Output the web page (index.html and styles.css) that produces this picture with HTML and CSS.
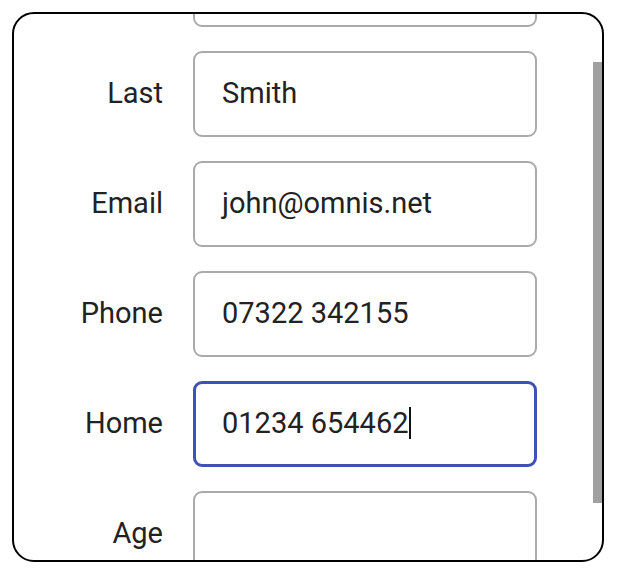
FILE: index.html
```html
<!DOCTYPE html>
<html>
<head>
<meta charset="utf-8">
<link rel="stylesheet" href="styles.css">
</head>
<body>
<div class="frame">
  <div class="form">
    <div class="row"><div class="label"></div><div class="field"></div></div>
    <div class="row"><div class="label">Last</div><div class="field">Smith</div></div>
    <div class="row"><div class="label">Email</div><div class="field">john@omnis.net</div></div>
    <div class="row"><div class="label">Phone</div><div class="field">07322 342155</div></div>
    <div class="row"><div class="label">Home</div><div class="field focused">01234 654462<span class="caret"></span></div></div>
    <div class="row"><div class="label">Age</div><div class="field"></div></div>
  </div>
  <div class="scrollbar"></div>
</div>
</body>
</html>
```
FILE: styles.css
```css
html, body { margin: 0; padding: 0; background: #fff; }
body { padding: 12px 0 0 12px; font-family: Roboto, "Noto Sans", sans-serif; color: #222; }
.frame {
  position: relative;
  width: 592px;
  height: 550px;
  box-sizing: border-box;
  border: 2px solid #000;
  border-radius: 22px;
  overflow: hidden;
}
.form {
  margin-top: -73px;
  display: flex;
  flex-direction: column;
  gap: 24px;
}
.row {
  display: grid;
  grid-template-columns: 149px 344px;
  column-gap: 30px;
  align-items: center;
}
.label { text-align: right; font-size: 29px; line-height: 34px; padding-bottom: 2px; }
.field {
  box-sizing: border-box;
  height: 86px;
  border: 2px solid #aaa;
  border-radius: 9px;
  padding: 0 0 2px 27px;
  font-size: 29px;
  line-height: 34px;
  display: flex;
  align-items: center;
}
.field.focused { border: 3px solid #3f51b5; padding-left: 26px; }
.caret { display: inline-block; width: 2px; height: 32px; background: #111; margin-left: 1px; }
.scrollbar {
  position: absolute;
  left: 579px;
  top: 48px;
  width: 9px;
  height: 441px;
  background: #a0a0a0;
}
```
